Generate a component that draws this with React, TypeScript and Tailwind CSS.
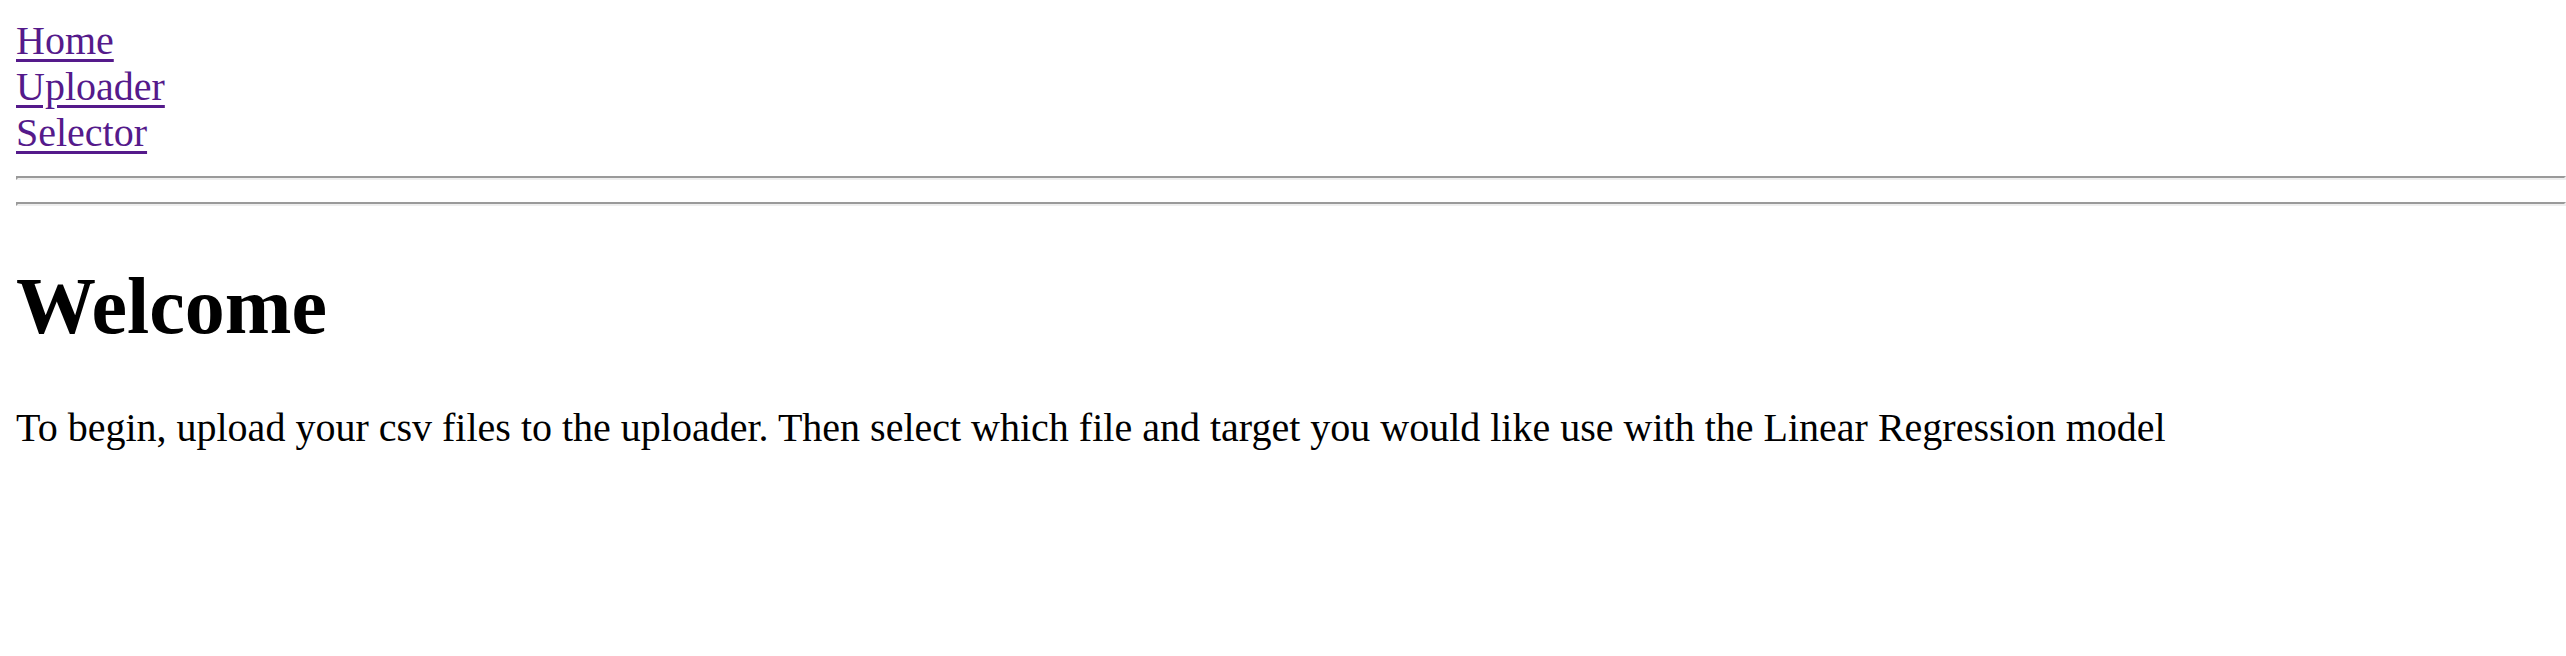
const LINKS = ['Home', 'Uploader', 'Selector'];

export default function App() {
    return (
        <div className="m-4 bg-white font-['Liberation_Serif','Times_New_Roman',serif] text-[40px] leading-[46px] text-black">
            <nav className="flex flex-col items-start pt-0.5">
                {LINKS.map((label) => (
                    <a key={label} href="#" className="text-[#551a8b] underline decoration-[3px] underline-offset-[5px]">
                        {label}
                    </a>
                ))}
            </nav>
            <hr className="-mr-4 mt-5 mb-[22px] h-1 border-2 border-t-[#9a9a9a] border-l-[#9a9a9a] border-b-[#eeeeee] border-r-[#eeeeee]" />
            <hr className="-mr-4 my-[22px] h-1 border-2 border-t-[#9a9a9a] border-l-[#9a9a9a] border-b-[#eeeeee] border-r-[#eeeeee]" />
            <h1 className="my-[53.6px] text-[80px] font-bold leading-[92px]">Welcome</h1>
            <p className="my-10 leading-[46px]">
                To begin, upload your csv files to the uploader. Then select which file and target you would like use with the Linear Regression model
            </p>
        </div>
    );
}
